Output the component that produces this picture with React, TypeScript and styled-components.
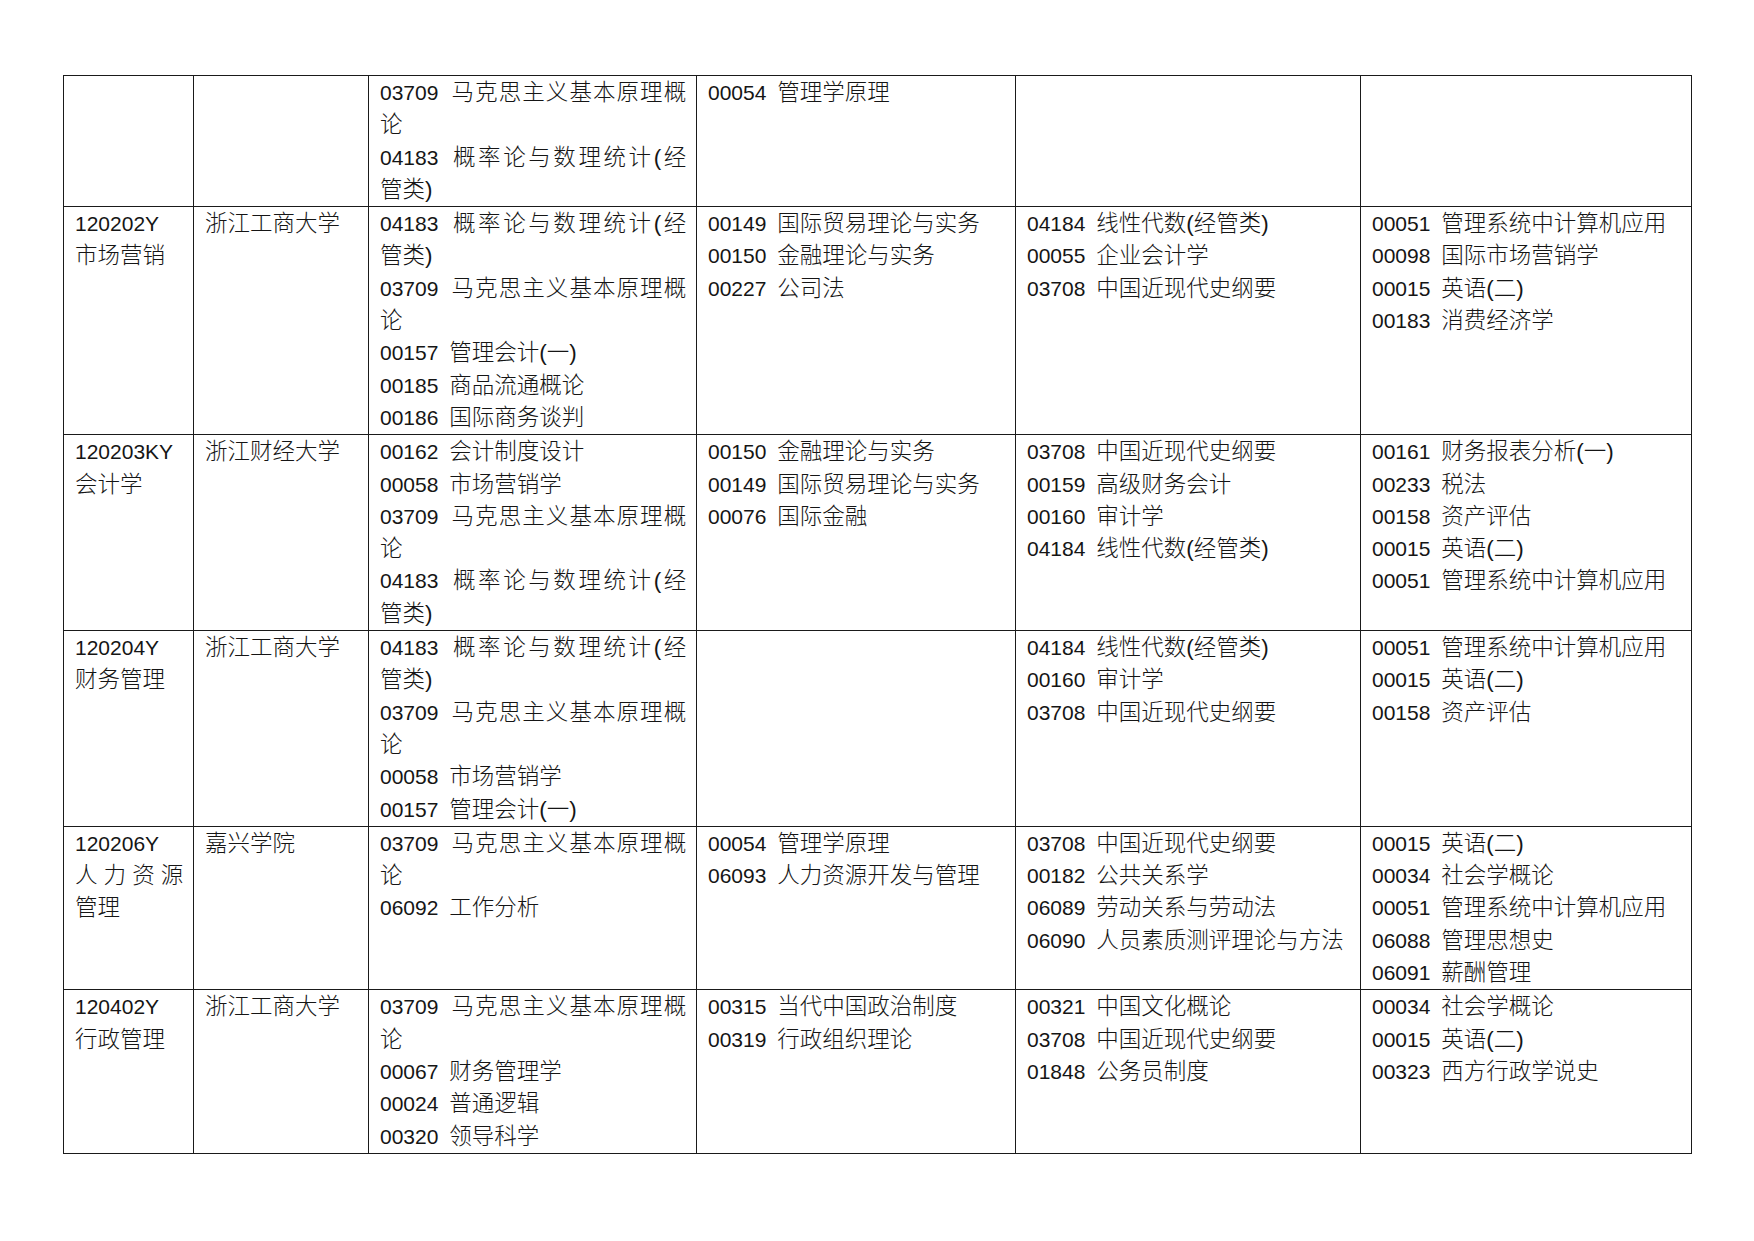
import React from "react";
import styled, { createGlobalStyle } from "styled-components";

const Global = createGlobalStyle`
  html, body { margin: 0; padding: 0; background: #ffffff; }
  body { font-family: "Liberation Sans", "Noto Sans CJK SC", sans-serif; color: #111; }
`;

const Page = styled.div`
  width: 1754px;
  min-height: 1241px;
  box-sizing: border-box;
  padding: 75px 0 0 63px;
  background: #fff;
`;

const Table = styled.table`
  border-collapse: collapse;
  table-layout: fixed;
  width: 1628px;
`;

const Col = styled.col<{ $w: number }>`
  width: ${(p) => p.$w}px;
`;

const Cell = styled.td`
  border: 1px solid #1a1a1a;
  vertical-align: top;
  padding: 1px 11px 0 11px;
  font-family: "Liberation Sans", "Noto Sans CJK SC", sans-serif;
  font-size: 22.5px;
  font-weight: 300;
  color: #151515;
`;

const Line = styled.div<{ $justify?: boolean }>`
  line-height: 32.3px;
  height: 32.3px;
  white-space: nowrap;
  text-align: ${(p) => (p.$justify ? "justify" : "left")};
  text-align-last: ${(p) => (p.$justify ? "justify" : "auto")};
  letter-spacing: ${(p) => (p.$justify ? "-1.2px" : "0")};
`;

const Code = styled.span`
  font-family: "Liberation Sans", sans-serif;
  font-size: 21px;
  font-weight: 400;
  letter-spacing: 0;
  margin-right: 5px;
`;

type Entry = { code?: string; lines: string[] };

type Row = {
  major: { code: string; name: string[] } | null;
  school: string;
  cols: Entry[][];
};

const MKS: Entry = { code: "03709", lines: ["马克思主义基本原理概", "论"] };
const GLT: Entry = { code: "04183", lines: ["概率论与数理统计(经", "管类)"] };
const e = (code: string, name: string): Entry => ({ code, lines: [name] });

const rows: Row[] = [
  {
    major: null,
    school: "",
    cols: [[MKS, GLT], [e("00054", "管理学原理")], [], []],
  },
  {
    major: { code: "120202Y", name: ["市场营销"] },
    school: "浙江工商大学",
    cols: [
      [GLT, MKS, e("00157", "管理会计(一)"), e("00185", "商品流通概论"), e("00186", "国际商务谈判")],
      [e("00149", "国际贸易理论与实务"), e("00150", "金融理论与实务"), e("00227", "公司法")],
      [e("04184", "线性代数(经管类)"), e("00055", "企业会计学"), e("03708", "中国近现代史纲要")],
      [e("00051", "管理系统中计算机应用"), e("00098", "国际市场营销学"), e("00015", "英语(二)"), e("00183", "消费经济学")],
    ],
  },
  {
    major: { code: "120203KY", name: ["会计学"] },
    school: "浙江财经大学",
    cols: [
      [e("00162", "会计制度设计"), e("00058", "市场营销学"), MKS, GLT],
      [e("00150", "金融理论与实务"), e("00149", "国际贸易理论与实务"), e("00076", "国际金融")],
      [e("03708", "中国近现代史纲要"), e("00159", "高级财务会计"), e("00160", "审计学"), e("04184", "线性代数(经管类)")],
      [e("00161", "财务报表分析(一)"), e("00233", "税法"), e("00158", "资产评估"), e("00015", "英语(二)"), e("00051", "管理系统中计算机应用")],
    ],
  },
  {
    major: { code: "120204Y", name: ["财务管理"] },
    school: "浙江工商大学",
    cols: [
      [GLT, MKS, e("00058", "市场营销学"), e("00157", "管理会计(一)")],
      [],
      [e("04184", "线性代数(经管类)"), e("00160", "审计学"), e("03708", "中国近现代史纲要")],
      [e("00051", "管理系统中计算机应用"), e("00015", "英语(二)"), e("00158", "资产评估")],
    ],
  },
  {
    major: { code: "120206Y", name: ["人力资源", "管理"] },
    school: "嘉兴学院",
    cols: [
      [MKS, e("06092", "工作分析")],
      [e("00054", "管理学原理"), e("06093", "人力资源开发与管理")],
      [e("03708", "中国近现代史纲要"), e("00182", "公共关系学"), e("06089", "劳动关系与劳动法"), e("06090", "人员素质测评理论与方法")],
      [e("00015", "英语(二)"), e("00034", "社会学概论"), e("00051", "管理系统中计算机应用"), e("06088", "管理思想史"), e("06091", "薪酬管理")],
    ],
  },
  {
    major: { code: "120402Y", name: ["行政管理"] },
    school: "浙江工商大学",
    cols: [
      [MKS, e("00067", "财务管理学"), e("00024", "普通逻辑"), e("00320", "领导科学")],
      [e("00315", "当代中国政治制度"), e("00319", "行政组织理论")],
      [e("00321", "中国文化概论"), e("03708", "中国近现代史纲要"), e("01848", "公务员制度")],
      [e("00034", "社会学概论"), e("00015", "英语(二)"), e("00323", "西方行政学说史")],
    ],
  },
];

const widths = [130, 175, 328, 319, 345, 331];

function EntryLines({ entry }: { entry: Entry }) {
  const n = entry.lines.length;
  return (
    <>
      {entry.lines.map((text, i) => (
        <Line key={i} $justify={i < n - 1}>
          {i === 0 && entry.code ? <Code>{entry.code} </Code> : null}
          {text}
        </Line>
      ))}
    </>
  );
}

export default function App() {
  return (
    <Page>
      <Global />
      <Table>
        <colgroup>
          {widths.map((w, i) => (
            <Col key={i} $w={w} />
          ))}
        </colgroup>
        <tbody>
          {rows.map((row, ri) => (
            <tr key={ri}>
              <Cell>
                {row.major ? (
                  <>
                    <Line>
                      <Code>{row.major.code}</Code>
                    </Line>
                    {row.major.name.map((nm, i) => (
                      <Line key={i} $justify={i < row.major!.name.length - 1}>
                        {nm}
                      </Line>
                    ))}
                  </>
                ) : null}
              </Cell>
              <Cell>{row.school ? <Line>{row.school}</Line> : null}</Cell>
              {row.cols.map((col, ci) => (
                <Cell key={ci}>
                  {col.map((entry, ei) => (
                    <EntryLines key={ei} entry={entry} />
                  ))}
                </Cell>
              ))}
            </tr>
          ))}
        </tbody>
      </Table>
    </Page>
  );
}
